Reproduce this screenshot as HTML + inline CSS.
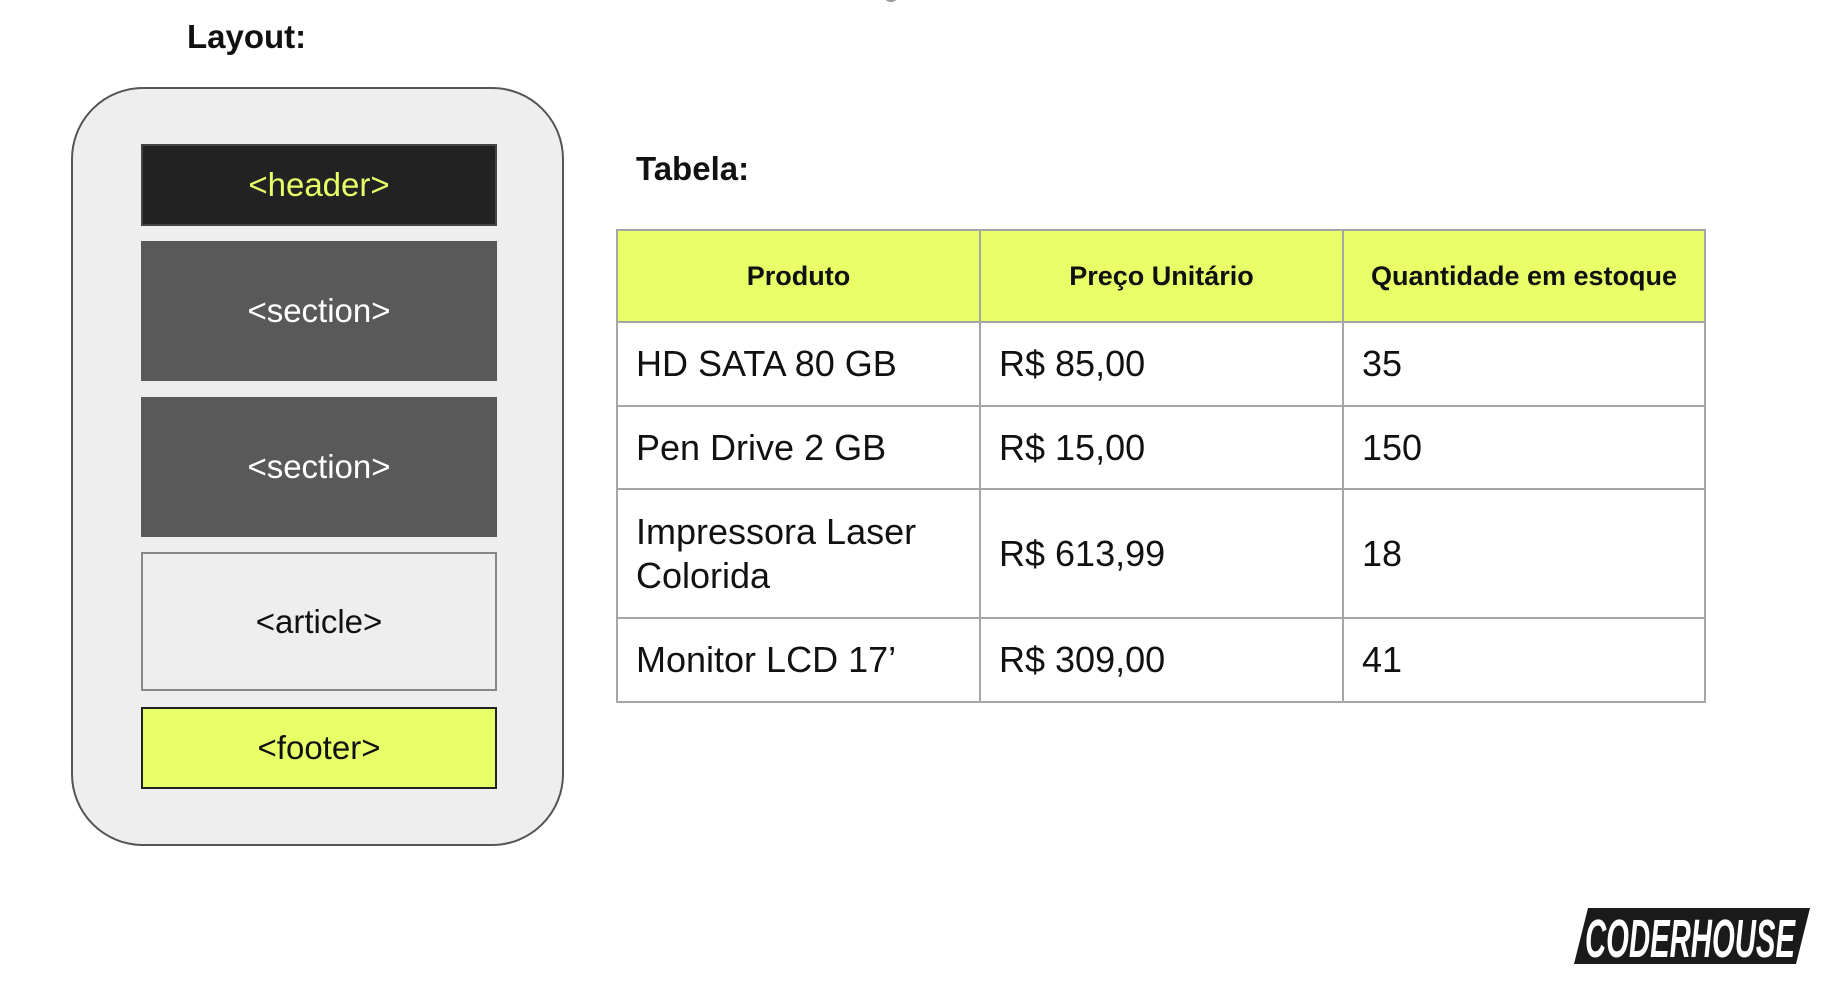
<!DOCTYPE html>
<html><head><meta charset="utf-8"><style>
*{margin:0;padding:0;box-sizing:border-box}
body{width:1825px;height:986px;background:#fff;position:relative;overflow:hidden;font-family:"Liberation Sans",sans-serif;color:#111}
.abs{position:absolute}
.box{position:absolute;left:141px;width:356px;display:flex;align-items:center;justify-content:center;font-size:33px}
table{position:absolute;left:616px;top:229px;width:1090px;border-collapse:collapse}
td,th{border:2px solid #a6a6a6;font-size:36px;font-weight:normal;text-align:left;padding:0 18px;line-height:44px}
th{background:#e9ff68;font-weight:bold;font-size:27px;text-align:center;height:92px}
</style></head><body>
<div class="abs" style="left:883px;top:-14px;width:16px;height:16px;border-radius:50%;background:#999"></div>
<div class="abs" style="left:187px;top:18px;font-size:33px;font-weight:bold">Layout:</div>
<div class="abs" style="left:71px;top:87px;width:493px;height:759px;border:2px solid #555;border-radius:72px;background:#eee"></div>
<div class="box" style="top:144px;height:82px;background:#222;border:2px solid #444;color:#e9ff68">&lt;header&gt;</div>
<div class="box" style="top:241px;height:140px;background:#595959;color:#fff">&lt;section&gt;</div>
<div class="box" style="top:397px;height:140px;background:#595959;color:#fff">&lt;section&gt;</div>
<div class="box" style="top:552px;height:139px;background:#eee;border:2px solid #888;color:#111">&lt;article&gt;</div>
<div class="box" style="top:707px;height:82px;background:#e9ff68;border:2px solid #222;color:#111">&lt;footer&gt;</div>
<div class="abs" style="left:636px;top:150px;font-size:33px;font-weight:bold">Tabela:</div>
<table>
<tr><th style="width:363px">Produto</th><th style="width:363px">Preço Unitário</th><th>Quantidade em estoque</th></tr>
<tr style="height:84px"><td>HD SATA 80 GB</td><td>R$ 85,00</td><td>35</td></tr>
<tr style="height:83px"><td>Pen Drive 2 GB</td><td>R$ 15,00</td><td>150</td></tr>
<tr style="height:129px"><td>Impressora Laser Colorida</td><td>R$ 613,99</td><td>18</td></tr>
<tr style="height:84px"><td>Monitor LCD 17’</td><td>R$ 309,00</td><td>41</td></tr>
</table>
<svg class="abs" style="left:1574px;top:908px" width="236" height="56"><polygon points="14,0 236,0 222,56 0,56" fill="#1a1a1a"/>
<text x="116" y="49" text-anchor="middle" font-family="Liberation Sans" font-weight="bold" font-style="italic" font-size="54" fill="#fff" textLength="210" lengthAdjust="spacingAndGlyphs">CODERHOUSE</text></svg>
</body></html>
